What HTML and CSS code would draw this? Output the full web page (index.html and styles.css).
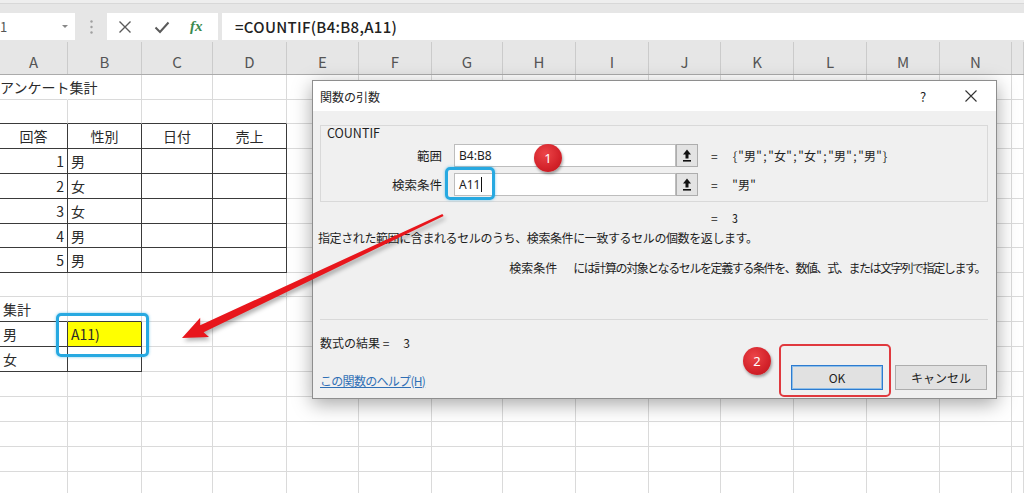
FILE: index.html
```html
<!DOCTYPE html>
<html lang="ja">
<head>
<meta charset="utf-8">
<title>関数の引数 - COUNTIF</title>
<link rel="stylesheet" href="styles.css">
</head>
<body>
<div class="app">
  <div class="toolbar">
    <div class="namebox"><span class="nbtext">1</span><span class="nbarrow"></span></div>
    <div class="tsep">
      <svg width="3" height="14" viewBox="0 0 3 14"><circle cx="1.5" cy="1.5" r="1.2" fill="#a0a0a0"/><circle cx="1.5" cy="7" r="1.2" fill="#a0a0a0"/><circle cx="1.5" cy="12.5" r="1.2" fill="#a0a0a0"/></svg>
    </div>
    <div class="fxbox">
      <svg class="ticon" width="14" height="14" viewBox="0 0 14 14"><path d="M1.5 1.5 L12.5 12.5 M12.5 1.5 L1.5 12.5" stroke="#5a5a5a" stroke-width="1.4" fill="none"/></svg>
      <svg class="ticon" width="16" height="14" viewBox="0 0 16 14"><path d="M1.5 7.5 L6 12 L14.5 2.5" stroke="#5a5a5a" stroke-width="2" fill="none"/></svg>
      <span class="fxtext">fx</span>
    </div>
    <div class="formula">=COUNTIF(B4:B8,A11)</div>
  </div>

  <div class="colhead">
    <div class="h">A</div><div class="h">B</div><div class="h">C</div><div class="h">D</div><div class="h">E</div><div class="h">F</div><div class="h">G</div><div class="h">H</div><div class="h">I</div><div class="h">J</div><div class="h">K</div><div class="h">L</div><div class="h">M</div><div class="h">N</div><div class="h"></div>
  </div>

  <div class="sheet">
    <!-- row 1 -->
    <div class="c nr">アンケート集計</div><div class="c"></div><div class="c"></div><div class="c"></div><div class="c"></div><div class="c"></div><div class="c"></div><div class="c"></div><div class="c"></div><div class="c"></div><div class="c"></div><div class="c"></div><div class="c"></div><div class="c"></div><div class="c"></div>
    <!-- row 2 -->
    <div class="c db"></div><div class="c db"></div><div class="c db"></div><div class="c db"></div><div class="c"></div><div class="c"></div><div class="c"></div><div class="c"></div><div class="c"></div><div class="c"></div><div class="c"></div><div class="c"></div><div class="c"></div><div class="c"></div><div class="c"></div>
    <!-- row 3 -->
    <div class="c dr db ctr">回答</div><div class="c dr db ctr">性別</div><div class="c dr db ctr">日付</div><div class="c dr db ctr">売上</div><div class="c"></div><div class="c"></div><div class="c"></div><div class="c"></div><div class="c"></div><div class="c"></div><div class="c"></div><div class="c"></div><div class="c"></div><div class="c"></div><div class="c"></div>
    <!-- row 4 -->
    <div class="c dr db num">1</div><div class="c dr db">男</div><div class="c dr db"></div><div class="c dr db"></div><div class="c"></div><div class="c"></div><div class="c"></div><div class="c"></div><div class="c"></div><div class="c"></div><div class="c"></div><div class="c"></div><div class="c"></div><div class="c"></div><div class="c"></div>
    <!-- row 5 -->
    <div class="c dr db num">2</div><div class="c dr db">女</div><div class="c dr db"></div><div class="c dr db"></div><div class="c"></div><div class="c"></div><div class="c"></div><div class="c"></div><div class="c"></div><div class="c"></div><div class="c"></div><div class="c"></div><div class="c"></div><div class="c"></div><div class="c"></div>
    <!-- row 6 -->
    <div class="c dr db num">3</div><div class="c dr db">女</div><div class="c dr db"></div><div class="c dr db"></div><div class="c"></div><div class="c"></div><div class="c"></div><div class="c"></div><div class="c"></div><div class="c"></div><div class="c"></div><div class="c"></div><div class="c"></div><div class="c"></div><div class="c"></div>
    <!-- row 7 -->
    <div class="c dr db num">4</div><div class="c dr db">男</div><div class="c dr db"></div><div class="c dr db"></div><div class="c"></div><div class="c"></div><div class="c"></div><div class="c"></div><div class="c"></div><div class="c"></div><div class="c"></div><div class="c"></div><div class="c"></div><div class="c"></div><div class="c"></div>
    <!-- row 8 -->
    <div class="c dr db num">5</div><div class="c dr db">男</div><div class="c dr db"></div><div class="c dr db"></div><div class="c"></div><div class="c"></div><div class="c"></div><div class="c"></div><div class="c"></div><div class="c"></div><div class="c"></div><div class="c"></div><div class="c"></div><div class="c"></div><div class="c"></div>
    <!-- row 9 -->
    <div class="c"></div><div class="c"></div><div class="c"></div><div class="c"></div><div class="c"></div><div class="c"></div><div class="c"></div><div class="c"></div><div class="c"></div><div class="c"></div><div class="c"></div><div class="c"></div><div class="c"></div><div class="c"></div><div class="c"></div>
    <!-- row 10 -->
    <div class="c db">集計</div><div class="c db"></div><div class="c"></div><div class="c"></div><div class="c"></div><div class="c"></div><div class="c"></div><div class="c"></div><div class="c"></div><div class="c"></div><div class="c"></div><div class="c"></div><div class="c"></div><div class="c"></div><div class="c"></div>
    <!-- row 11 -->
    <div class="c dr db">男</div><div class="c dr db yel">A11)</div><div class="c"></div><div class="c"></div><div class="c"></div><div class="c"></div><div class="c"></div><div class="c"></div><div class="c"></div><div class="c"></div><div class="c"></div><div class="c"></div><div class="c"></div><div class="c"></div><div class="c"></div>
    <!-- row 12 -->
    <div class="c dr db">女</div><div class="c dr db"></div><div class="c"></div><div class="c"></div><div class="c"></div><div class="c"></div><div class="c"></div><div class="c"></div><div class="c"></div><div class="c"></div><div class="c"></div><div class="c"></div><div class="c"></div><div class="c"></div><div class="c"></div>
    <!-- rows 13-17 -->
    <div class="c"></div><div class="c"></div><div class="c"></div><div class="c"></div><div class="c"></div><div class="c"></div><div class="c"></div><div class="c"></div><div class="c"></div><div class="c"></div><div class="c"></div><div class="c"></div><div class="c"></div><div class="c"></div><div class="c"></div>
    <div class="c"></div><div class="c"></div><div class="c"></div><div class="c"></div><div class="c"></div><div class="c"></div><div class="c"></div><div class="c"></div><div class="c"></div><div class="c"></div><div class="c"></div><div class="c"></div><div class="c"></div><div class="c"></div><div class="c"></div>
    <div class="c"></div><div class="c"></div><div class="c"></div><div class="c"></div><div class="c"></div><div class="c"></div><div class="c"></div><div class="c"></div><div class="c"></div><div class="c"></div><div class="c"></div><div class="c"></div><div class="c"></div><div class="c"></div><div class="c"></div>
    <div class="c"></div><div class="c"></div><div class="c"></div><div class="c"></div><div class="c"></div><div class="c"></div><div class="c"></div><div class="c"></div><div class="c"></div><div class="c"></div><div class="c"></div><div class="c"></div><div class="c"></div><div class="c"></div><div class="c"></div>
    <div class="c"></div><div class="c"></div><div class="c"></div><div class="c"></div><div class="c"></div><div class="c"></div><div class="c"></div><div class="c"></div><div class="c"></div><div class="c"></div><div class="c"></div><div class="c"></div><div class="c"></div><div class="c"></div><div class="c"></div>
  </div>

  <div class="dialog">
    <div class="dtitle">
      <span class="dtitle-text">関数の引数</span>
      <span class="dhelp">?</span>
      <span class="dclose"><svg width="12" height="12" viewBox="0 0 12 12"><path d="M0.5 0.5 L11.5 11.5 M11.5 0.5 L0.5 11.5" stroke="#333" stroke-width="1.1" fill="none"/></svg></span>
    </div>
    <div class="dbody">
      <div class="group">
        <div class="glabel">COUNTIF</div>
        <div class="arow">
          <span class="alabel">範囲</span>
          <span class="ainput">B4:B8</span>
          <span class="abtn"><svg width="10" height="13" viewBox="0 0 10 13"><path d="M5 0.5 L1 5.5 H3.5 V9.5 H6.5 V5.5 H9 Z" fill="#111"/><rect x="1" y="11" width="8" height="1.6" fill="#111"/></svg></span>
          <span class="aeq">=</span>
          <span class="aval">{"男";"女";"女";"男";"男"}</span>
        </div>
        <div class="arow arow2">
          <span class="alabel">検索条件</span>
          <span class="ainput">A11<span class="caret"></span></span>
          <span class="abtn"><svg width="10" height="13" viewBox="0 0 10 13"><path d="M5 0.5 L1 5.5 H3.5 V9.5 H6.5 V5.5 H9 Z" fill="#111"/><rect x="1" y="11" width="8" height="1.6" fill="#111"/></svg></span>
          <span class="aeq">=</span>
          <span class="aval">"男"</span>
        </div>
      </div>
      <div class="eqres"><span class="aeq">=</span><span class="aval">3</span></div>
      <div class="desc1">指定された範囲に含まれるセルのうち、検索条件に一致するセルの個数を返します。</div>
      <div class="desc2"><span class="d2label">検索条件</span><span class="d2text">には計算の対象となるセルを定義する条件を、数値、式、または文字列で指定します。</span></div>
      <div class="sep"></div>
      <div class="result"><span>数式の結果 =</span><span class="resval">3</span></div>
      <div class="footer">
        <a class="helplink" href="#">この関数のヘルプ(H)</a>
        <span class="btn btn-ok">OK</span>
        <span class="btn">キャンセル</span>
      </div>
    </div>
  </div>

  <div class="hl-blue hl-input"></div>
  <div class="hl-blue hl-cell"></div>
  <div class="hl-red"></div>
  <div class="badge badge1">1</div>
  <div class="badge badge2">2</div>

  <svg class="arrow" width="1024" height="493" viewBox="0 0 1024 493">
    <polygon points="442.4,214.0 443.6,216.0 203.6,332.2 209.0,337.0 182,338 200.2,317.8 200.2,325.3" fill="#e8161c"/>
  </svg>
</div>
</body>
</html>
```

FILE: styles.css
```css
* { box-sizing: border-box; }

body {
  margin: 0;
  width: 1024px;
  height: 493px;
  overflow: hidden;
  background: #fff;
  font-family: "Noto Sans CJK JP", "Noto Sans", sans-serif;
  color: #222;
}

.app {
  position: relative;
  width: 1024px;
  height: 493px;
  overflow: hidden;
}

/* ---------- formula toolbar ---------- */
.toolbar {
  display: flex;
  height: 42px;
  padding: 13px 0 2px;
  background: linear-gradient(#eeeeee 0 3px, #d8d8d8 3px 4px, #e6e6e6 4px);
}

.namebox {
  width: 75px;
  background: #fff;
  display: flex;
  align-items: center;
  justify-content: space-between;
  padding-right: 7px;
  font-size: 13px;
  color: #555;
}
.nbtext { margin-left: 0; }
.nbarrow {
  width: 0;
  height: 0;
  border-left: 3px solid transparent;
  border-right: 3px solid transparent;
  border-top: 3px solid #888;
}

.tsep {
  width: 32px;
  display: flex;
  align-items: center;
  justify-content: center;
}

.fxbox {
  width: 111px;
  background: #fff;
  display: flex;
  align-items: center;
  padding-left: 11px;
}
.fxbox .ticon:first-child { margin-right: 22px; }
.fxbox .ticon:nth-child(2) { margin-right: 20px; }
.fxtext {
  font-family: "Liberation Serif", serif;
  font-style: italic;
  font-size: 15px;
  color: #3a8a4f;
  font-weight: bold;
}

.formula {
  flex: 1;
  margin-left: 4px;
  background: #fff;
  padding-left: 13px;
  font-size: 15px;
  font-weight: 500;
  line-height: 27px;
  letter-spacing: 0.3px;
  color: #222;
}

/* ---------- sheet ---------- */
.colhead, .sheet {
  display: grid;
  grid-template-columns: 68px 74px 71px 74px 72px 73px 71px 73px 73px 72px 73px 73px 73px 72px 12px;
}

.colhead {
  height: 33px;
  background: #e6e6e6;
  border-bottom: 1px solid #ababab;
}
.h {
  border-right: 1px solid #cbcbcb;
  display: flex;
  align-items: center;
  justify-content: center;
  padding-top: 6px;
  font-size: 15px;
  color: #555;
}

.sheet {
  grid-template-rows: 25px 24px 25px 25px 25px 25px 24px 25px 24px 25px 25px 25px 25px 25px 25px 25px 25px;
}
.c {
  border-right: 1px solid #dadada;
  border-bottom: 1px solid #dadada;
  display: flex;
  align-items: center;
  padding: 0 3px;
  font-size: 14px;
  white-space: nowrap;
  color: #2a2a2a;
}
.c.nr { border-right-color: transparent; padding-left: 0; }
.c.dr { border-right-color: #3a3a3a; }
.c.db { border-bottom-color: #3a3a3a; }
.c.ctr { justify-content: center; }
.c.num { justify-content: flex-end; }
.c.yel { background: #ffff00; }

/* ---------- dialog ---------- */
.dialog {
  position: absolute;
  left: 312px;
  top: 80px;
  width: 685px;
  height: 319px;
  background: #f0f0f0;
  border: 1px solid #8e8e8e;
  box-shadow: 0 5px 18px rgba(0, 0, 0, 0.35);
  font-size: 12px;
  color: #1e1e1e;
  z-index: 2;
}

.dtitle {
  height: 30px;
  background: #fff;
  display: flex;
  align-items: center;
  padding-left: 7px;
  padding-right: 15px;
}
.dtitle-text { flex: 1; }
.dhelp {
  width: 20px;
  text-align: center;
  font-size: 13px;
  margin-right: 28px;
}
.dclose {
  width: 20px;
  display: flex;
  justify-content: center;
}

.dbody {
  padding: 14px 8px 0 7px;
}

.group {
  height: 77px;
  border: 1px solid #d9d9d9;
}
.glabel {
  height: 17px;
  padding-left: 6px;
  line-height: 13px;
  font-size: 12.5px;
}
.arow {
  display: flex;
  align-items: center;
  height: 23px;
  margin-top: 1px;
}
.arow2 { margin-top: 6px; }
.alabel {
  width: 121px;
  margin-right: 12px;
  text-align: right;
  font-size: 12.5px;
}
.ainput {
  width: 222px;
  height: 23px;
  background: #fff;
  border: 1px solid #bdbdbd;
  padding-left: 4px;
  line-height: 21px;
  font-family: "Noto Sans", sans-serif;
  font-size: 12px;
  display: flex;
  align-items: center;
}
.caret {
  display: inline-block;
  width: 1px;
  height: 15px;
  background: #111;
  margin-left: 1px;
}
.abtn {
  width: 22px;
  height: 23px;
  border: 1px solid #adadad;
  background: #e3e3e3;
  display: flex;
  align-items: center;
  justify-content: center;
}
.aeq {
  display: inline-block;
  width: 21px;
  margin-left: 13px;
  font-size: 12px;
}
.aval {
  font-family: "Noto Sans Mono CJK JP", "Noto Sans CJK JP", monospace;
  font-size: 12px;
}

.eqres {
  margin-top: 8px;
  padding-left: 378px;
  line-height: 16px;
}
.desc1 {
  margin-top: 4px;
  margin-left: -2px;
  line-height: 16px;
  letter-spacing: -0.4px;
}
.desc2 {
  margin-top: 14px;
  line-height: 16px;
  text-align: right;
  padding-right: 3px;
}
.d2label { margin-right: 16px; }
.d2text { letter-spacing: -1.4px; }

.sep {
  margin-top: 43px;
  height: 1px;
  background: #d9d9d9;
}
.result {
  margin-top: 15px;
  line-height: 16px;
}
.resval { margin-left: 14px; }

.footer {
  margin-top: 14px;
  display: flex;
  height: 25px;
  padding-right: 1px;
}
.helplink {
  align-self: center;
  padding-top: 5px;
  color: #2f6fb5;
  text-decoration: underline;
  letter-spacing: -0.7px;
  margin-right: auto;
}
.btn {
  width: 92px;
  height: 25px;
  border: 1px solid #adadad;
  background: #e1e1e1;
  display: flex;
  align-items: center;
  justify-content: center;
  margin-left: 12px;
}
.btn-ok {
  border: 1px solid #2d7bd0;
  box-shadow: inset 0 0 0 1px #8fbfe8;
}

/* ---------- annotations ---------- */
.hl-blue {
  position: absolute;
  border: 3px solid #27a9e1;
  border-radius: 5px;
  box-shadow: 0 0 3px rgba(39, 169, 225, 0.6);
  z-index: 3;
}
.hl-input { left: 445px; top: 167px; width: 50px; height: 33px; }
.hl-cell { left: 56px; top: 313px; width: 93px; height: 44px; }

.hl-red {
  position: absolute;
  left: 779px;
  top: 344px;
  width: 112px;
  height: 53px;
  border: 2px solid #e0393e;
  border-radius: 5px;
  z-index: 3;
}

.badge {
  position: absolute;
  width: 28px;
  height: 28px;
  border-radius: 50%;
  background: radial-gradient(circle at 40% 35%, #ec4548, #d3222a 60%, #b9161d);
  box-shadow: 1px 2px 3px rgba(0, 0, 0, 0.35);
  color: #fff;
  font-family: "Noto Sans", sans-serif;
  font-size: 13px;
  display: flex;
  align-items: center;
  justify-content: center;
  z-index: 4;
}
.badge1 { left: 534px; top: 144px; }
.badge2 { left: 743px; top: 347px; }

.arrow {
  position: absolute;
  left: 0;
  top: 0;
  z-index: 5;
  filter: drop-shadow(2px 3px 2px rgba(0, 0, 0, 0.3));
  pointer-events: none;
}
```
